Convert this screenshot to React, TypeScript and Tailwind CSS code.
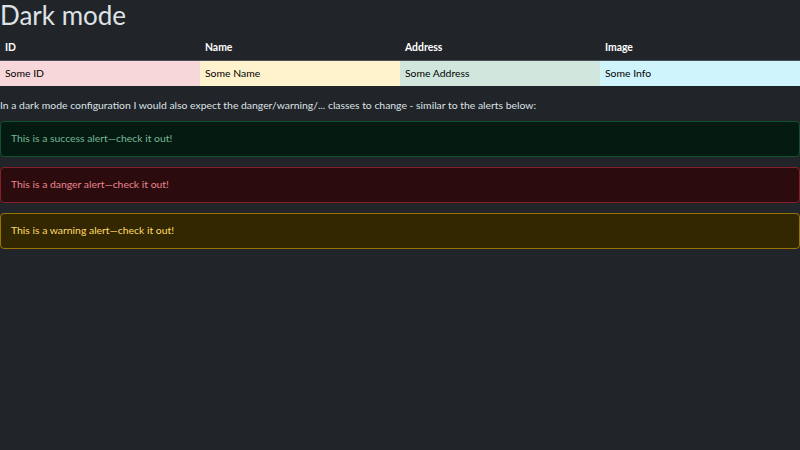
export default function App() {
  const cells = [
    { head: 'ID', body: 'Some ID', bg: 'bg-[#f8d7da]' },
    { head: 'Name', body: 'Some Name', bg: 'bg-[#fff3cd]' },
    { head: 'Address', body: 'Some Address', bg: 'bg-[#d1e7dd]' },
    { head: 'Image', body: 'Some Info', bg: 'bg-[#cff4fc]' },
  ];

  const alerts = [
    { text: 'This is a success alert—check it out!', cls: 'bg-[#051b11] border-[#0f5132] text-[#75b798]' },
    { text: 'This is a danger alert—check it out!', cls: 'bg-[#2c0b0e] border-[#842029] text-[#ea868f]' },
    { text: 'This is a warning alert—check it out!', cls: 'bg-[#332701] border-[#997404] text-[#ffda6a]' },
  ];

  return (
    <div className="min-h-[450px] w-[800px] bg-[#212529] text-[#dee2e6] font-['Lato',sans-serif] text-[10.4px]">
      <h1 className="h-[36px] text-[26px] leading-[30px] font-normal">Dark mode</h1>

      <div className="grid grid-cols-4">
        {cells.map(c => (
          <div key={c.head} className="h-[25px] px-[5px] flex items-center font-bold text-white border-b border-[#495057]">
            {c.head}
          </div>
        ))}
        {cells.map(c => (
          <div key={c.body} className={`h-[26px] px-[5px] flex items-center text-black border-b border-[#212529] ${c.bg}`}>
            {c.body}
          </div>
        ))}
      </div>

      <p className="mt-[8px] h-[26px] leading-[20px]">
        In a dark mode configuration I would also expect the danger/warning/... classes to change - similar to the alerts below:
      </p>

      <div className="flex flex-col gap-[10px]">
        {alerts.map(a => (
          <div key={a.text} className={`h-[36px] px-[10px] flex items-center border rounded-[4px] ${a.cls}`}>
            {a.text}
          </div>
        ))}
      </div>
    </div>
  );
}
